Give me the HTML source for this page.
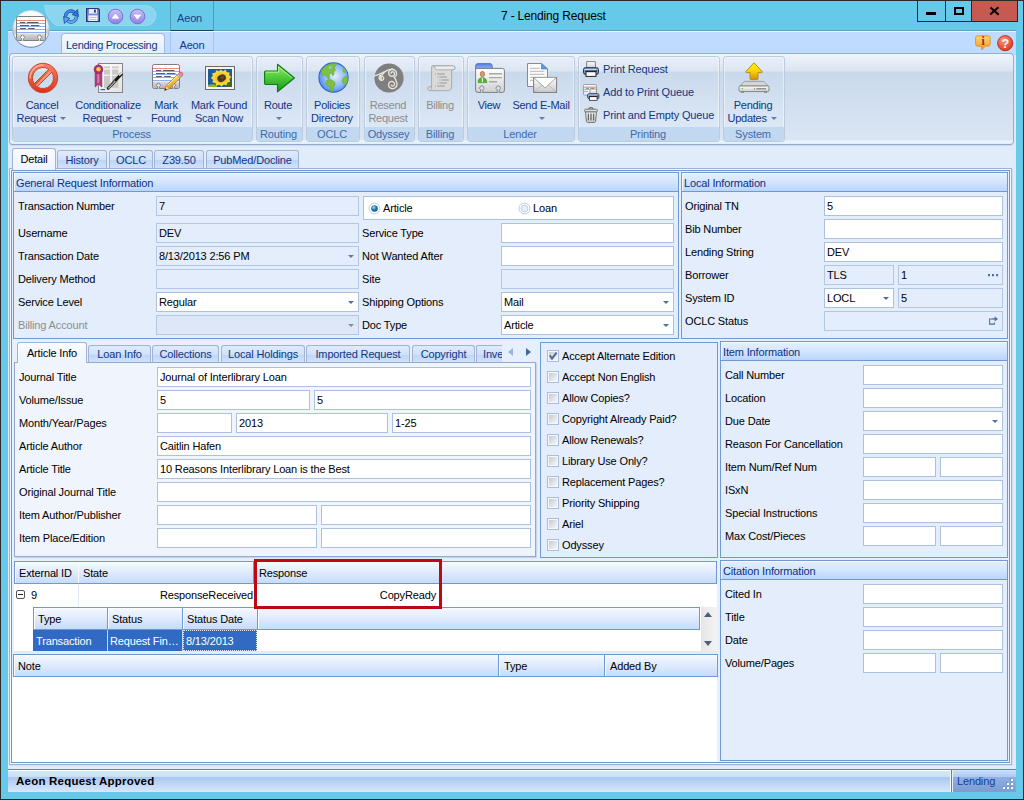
<!DOCTYPE html>
<html><head><meta charset="utf-8"><title>7 - Lending Request</title>
<style>
html,body{margin:0;padding:0}
body{width:1024px;height:800px;overflow:hidden;position:relative;background:#67c9e9;font-family:"Liberation Sans",sans-serif;font-size:11px;color:#000;letter-spacing:-0.15px}
body>*{position:absolute;box-sizing:content-box}
i{position:absolute;display:block}
#frame{left:0;top:0;width:1022px;height:798px;border:1px solid #2b2b2b;background:#67c9e9}
#client{left:8px;top:31px;width:1008px;height:761px;background:#e1ecfa}
#title{left:501px;top:8px;font-size:12px;line-height:16px;color:#000;letter-spacing:-.18px;white-space:nowrap}
#capbox{left:917px;top:0;width:99px;height:21px;border:1px solid #262626;border-top:0}
.cbd{top:1px;width:1px;height:20px;background:#262626}
#capx{left:972px;top:1px;width:45px;height:20px;background:#c75a50}
#qat{display:none}
#ctx{left:170px;top:1px;width:42px;height:29px;border-left:1px solid #4c9db8;border-right:1px solid #4c9db8;border-bottom:1px solid #24424e;color:#1e3f8f;text-align:left;text-indent:6px;line-height:34px}
#ctx2{left:170px;top:32px;width:42px;height:21px;border-left:1px solid #a5c4ee;border-right:1px solid #a5c4ee;background:linear-gradient(#c6dfff,#bfdbff)}
#tabbar{left:8px;top:30px;width:1008px;height:24px;background:linear-gradient(#eef4fd 0,#eef4fd 1px,#bfdbff 1px);border-top:1px solid #5aa4c0}
#rtab{left:61px;top:33px;width:102px;height:21px;letter-spacing:-.3px;border:1px solid #9dbce4;border-bottom:0;border-radius:4px 4px 0 0;background:linear-gradient(#f5f9fe,#e4edf8);color:#103684;text-align:left;text-indent:4px;line-height:23px}
#rtab2{left:171px;top:34px;width:42px;height:20px;color:#103684;text-align:center;line-height:22px}
#rpanel{left:9px;top:53px;width:1003px;height:90px;border:1px solid #8daee0;border-bottom-color:#93a7c9;border-radius:4px;background:linear-gradient(#f2f6fb 0,#edf2fa 2px,#dae5f2 17px,#c9d9ec 18px,#dbe6f4 86px,#eef6fd 87px,#dbf0fa 100%);box-shadow:0 1px 1px #cdd9ea}
.rg{top:56px;height:84px;border:1px solid #bccbdd;border-radius:3px;background:linear-gradient(#f3f7fc 0,#e8eef8 1px,#dce6f3 14px,#c9d9ec 15px,#dde8f6 70px);box-shadow:inset 1px 0 0 rgba(255,255,255,.45),inset -1px 0 0 rgba(255,255,255,.45);overflow:hidden}
.rgl{position:absolute;left:0;right:0;bottom:0;height:14px;color:#3e6aaa;text-align:center;line-height:14px;background:#c1d8f0;text-indent:-2px}
.rb{top:99px;width:100px;text-align:center;color:#103684;line-height:13px;white-space:nowrap;letter-spacing:-0.25px}
.rb div{height:13px}
.rb.dis{color:#8d8d8d}
.da{position:relative;display:inline-block;width:0;height:0;border:3px solid transparent;border-top:3px solid #5a7db5;border-bottom:0;vertical-align:2px;margin-left:1px}
.rs{color:#103684;line-height:13px;white-space:nowrap}
.l{line-height:13px;white-space:nowrap}
.l.dis{color:#8d8d8d}
.b{border:1px solid #abc1de;background:#fff;line-height:18px;padding:0;text-indent:2px;white-space:nowrap;overflow:hidden}
.b.ro{background:#e3edfb;border-color:#b2c7e3}
.b.dz{background:#dde7f6}
.ca{right:4px;top:8px;width:0;height:0;border:3px solid transparent;border-top:3px solid #4a6ea9;border-bottom:0}
.dots{position:absolute;right:3px;top:0;color:#33518f;letter-spacing:1px;font-weight:bold;text-indent:0}
.g{border:1px solid #6e99d3;background:#e3edfb}
.gh{border-bottom:1px solid #6e99d3;box-shadow:inset 1px 1px 0 #f4f8ff;background:linear-gradient(#e6f0ff,#d3e5ff 50%,#b9d5fe);color:#0c2f7e;padding-left:2px;overflow:hidden}
.tb{border:1px solid #a1b4d6;border-bottom:0;border-radius:3px 3px 0 0;background:linear-gradient(#dfebfb,#cfe1fa 50%,#bdd5f6 51%,#d3e4fb);color:#103684;text-align:center;white-space:nowrap}
.tb.sel{background:linear-gradient(#f9fbff,#eef4fd);color:#000;z-index:2}
#page{left:9px;top:168px;width:1001px;height:595px;border:1px solid #9fb2d6;background:#f3f7fe;box-shadow:1px 1px 0 #d3deef}
#page2{left:11px;top:170px;width:997px;height:591px;border:1px solid #6e99d3;background:#e6effc}
#apage{left:14px;top:362px;width:520px;height:193px;border:1px solid #93a9ce;background:#f0f5fd;box-shadow:1px 1px 1px #c9d6ea}
.pn{border:1px solid #6e99d3;background:#e3edfb}
.nl{width:0;height:0;border:4px solid transparent;border-right:5px solid #9bb2d9;border-left:0}
.nr{width:0;height:0;border:4px solid transparent;border-left:5px solid #3f66ab;border-right:0}
.wh{background:#fff}
.h{border-right:1px solid #6e99d3;border-bottom:1px solid #6e99d3;box-shadow:inset 1px 1px 0 #f8fbff;padding-top:1px;background:linear-gradient(#f6f9ff,#e1ecfd 45%,#c6dbfb);padding-left:5px;white-space:nowrap;overflow:hidden}
.gl{height:1px;background:#6e99d3}
.vl{width:1px;background:#6e99d3}
.exp{width:7px;height:7px;border:1px solid #555;border-radius:2px;background:#fff}
.exp i{left:1px;top:3px;width:5px;height:1px;background:#222}
.selrow{background:#316ac5}
.sc{color:#fff;line-height:22px;white-space:nowrap}
.foc{border:1px dotted #dfe8f7}
.sb{background:linear-gradient(to right,#e6e6e6,#f4f4f4)}
.up{width:0;height:0;border:4.5px solid transparent;border-bottom:5px solid #4f5d80;border-top:0}
.dn{width:0;height:0;border:4.5px solid transparent;border-top:5px solid #4f5d80;border-bottom:0}
.rowsep{background:#e1ecfa}
#red{left:254px;top:559px;width:182px;height:44px;border:3px solid #bc0a14}
#status{left:8px;top:769px;width:1008px;height:22px;background:linear-gradient(#fafcff 0,#fafcff 1px,#d8e6f9 1px,#cbdef6 7px,#a9c8f2 7px,#d9e7f8 100%);border-top:1px solid #5a84c2;line-height:23px;font-size:11px;letter-spacing:0}
#status b{margin-left:8px;font-size:11.5px;letter-spacing:.22px}
#spanel{left:950px;top:770px;width:63px;height:22px;border-left:1px solid #f6f9fe;box-shadow:inset 1px 0 0 #567fbe,inset 2px 0 0 #e8f0fc;background:linear-gradient(#d5e4fa 0,#c7dbf7 1px,#afc9f0 7px,#8fb0e4 7px,#7d9dd0 100%);color:#163f94;line-height:23px;text-indent:6px;width:65px}

.xb{left:989.2px;top:9.9px;width:10.6px;height:2.4px;background:#000}

</style></head>
<body>
<svg width="0" height="0" style="left:0;top:0"><defs>
<linearGradient id="gCard" x1="0" y1="0" x2="0" y2="1"><stop offset="0" stop-color="#dcdcdc"/><stop offset="1" stop-color="#b4b4b4"/></linearGradient>
<linearGradient id="gRed" x1="0" y1="0" x2="0" y2="1"><stop offset="0" stop-color="#f7846a"/><stop offset="1" stop-color="#d9331c"/></linearGradient>
<linearGradient id="gRed2" x1="0" y1="0" x2="0" y2="1"><stop offset="0" stop-color="#fbb09c"/><stop offset="1" stop-color="#ee6248"/></linearGradient>
<linearGradient id="gGreen" x1="0" y1="0" x2="0" y2="1"><stop offset="0" stop-color="#93ee62"/><stop offset=".5" stop-color="#4cc83a"/><stop offset="1" stop-color="#16931a"/></linearGradient>
<radialGradient id="gGlobe" cx=".55" cy=".45" r=".6"><stop offset="0" stop-color="#e4effd"/><stop offset=".6" stop-color="#8dbaf6"/><stop offset="1" stop-color="#4a86e8"/></radialGradient>
<linearGradient id="gYel" x1="0" y1="0" x2="0" y2="1"><stop offset="0" stop-color="#fff400"/><stop offset=".45" stop-color="#f6d80a"/><stop offset="1" stop-color="#d28e12"/></linearGradient>
<linearGradient id="gSilver" x1="0" y1="0" x2="0" y2="1"><stop offset="0" stop-color="#ffffff"/><stop offset="1" stop-color="#c9c9c9"/></linearGradient>
<linearGradient id="gOrb" x1="0" y1="0" x2="0" y2="1"><stop offset="0" stop-color="#ffffff"/><stop offset=".45" stop-color="#e6ebf1"/><stop offset=".55" stop-color="#c4cedb"/><stop offset="1" stop-color="#e8eef6"/></linearGradient>
<linearGradient id="gOrbS" x1="0" y1="0" x2="0" y2="1"><stop offset="0" stop-color="#dde3ea"/><stop offset=".5" stop-color="#a9b8cc"/><stop offset="1" stop-color="#5f7fab"/></linearGradient>
<linearGradient id="gPurp" x1="0" y1="0" x2="0" y2="1"><stop offset="0" stop-color="#c9c2f9"/><stop offset="1" stop-color="#8f7fe6"/></linearGradient>
<linearGradient id="gBlueTab" x1="0" y1="0" x2="0" y2="1"><stop offset="0" stop-color="#4d7fe6"/><stop offset="1" stop-color="#8fb2f5"/></linearGradient>
<linearGradient id="gOrange" x1="0" y1="0" x2="0" y2="1"><stop offset="0" stop-color="#ffd27a"/><stop offset="1" stop-color="#f39a1e"/></linearGradient>
<radialGradient id="gHelp" cx=".4" cy=".3" r=".8"><stop offset="0" stop-color="#ff9a7a"/><stop offset="1" stop-color="#d92a14"/></radialGradient>
<linearGradient id="gDoc" x1="0" y1="0" x2="1" y2="1"><stop offset="0" stop-color="#ffffff"/><stop offset="1" stop-color="#e2e2e2"/></linearGradient>
<linearGradient id="gPaper" x1="0" y1="0" x2="0" y2="1"><stop offset="0" stop-color="#ffffff"/><stop offset="1" stop-color="#d0d0d0"/></linearGradient>
<linearGradient id="gPen" x1="0" y1="0" x2="0" y2="1"><stop offset="0" stop-color="#ffd94a"/><stop offset="1" stop-color="#e79a0c"/></linearGradient>
<linearGradient id="gChk" x1="0" y1="0" x2="1" y2="1"><stop offset="0" stop-color="#c6cad2"/><stop offset="1" stop-color="#f6f7f9"/></linearGradient>
<radialGradient id="gBall" cx=".4" cy=".35" r=".7"><stop offset="0" stop-color="#a8dcf0"/><stop offset=".45" stop-color="#2a86b8"/><stop offset="1" stop-color="#0e4a80"/></radialGradient>
</defs></svg>
<div id="frame"></div>
<div id="client"></div>
<div id="title">7 - Lending Request</div>
<div id="capbox"></div>
<div class="cbd" style="left:945px"></div><div class="cbd" style="left:971px"></div>
<div id="capx"></div>
<i style="left:926px;top:12px;width:10px;height:3px;background:#000"></i>
<i style="left:954px;top:7px;width:6px;height:4px;border:2px solid #000"></i>
<i class="xb" style="transform:rotate(42deg)"></i><i class="xb" style="transform:rotate(-42deg)"></i>
<div id="qat"></div>
<svg style="left:0;top:0" width="170" height="31" viewBox="0 0 170 31"><path d="M44.5 5.5 H146 A10 10 0 0 1 146 25.5 H56 Q46 18 44.5 5.5 Z" fill="#fff" fill-opacity=".24" stroke="#fff" stroke-opacity=".22" stroke-width="1"/></svg><svg style="left:63px;top:7.5px" width="16" height="17" viewBox="0 0 16 17"><path d="M2.6 8.4 A5.4 5.4 0 0 1 11.4 4.2" fill="none" stroke="#1d4fa8" stroke-width="3.4"/><path d="M2.6 8.4 A5.4 5.4 0 0 1 11.4 4.2" fill="none" stroke="#3f8aea" stroke-width="2"/><path d="M9.2 6.6 L14.6 1.6 L15.4 8.6 Z" fill="#2f74dc" stroke="#1d4fa8" stroke-width=".9" stroke-linejoin="round"/><path d="M13.4 8.6 A5.4 5.4 0 0 1 4.6 12.8" fill="none" stroke="#1d4fa8" stroke-width="3.4"/><path d="M13.4 8.6 A5.4 5.4 0 0 1 4.6 12.8" fill="none" stroke="#62a8f6" stroke-width="2"/><path d="M6.8 10.4 L1.4 15.4 L.6 8.4 Z" fill="#5aa2f2" stroke="#1d4fa8" stroke-width=".9" stroke-linejoin="round"/></svg><svg style="left:86px;top:8px" width="14" height="14" viewBox="0 0 14 14"><path d="M.6 .6 H12.2 L13.4 1.8 V13.4 H.6 Z" fill="#7b8fd0" stroke="#27357e" stroke-width="1.2" stroke-linejoin="round"/><rect x="3" y="1" width="8" height="4.6" fill="#e8ecf8"/><rect x="8" y="1.6" width="1.8" height="3" fill="#27357e"/><rect x="2.4" y="7.4" width="9.2" height="5.6" fill="#f4f4f8"/><path d="M3.6 9.5 H10.4 M3.6 11.5 H10.4" stroke="#b9bdd0" stroke-width=".9"/></svg><svg style="left:106.5px;top:7.5px" width="17" height="17" viewBox="0 0 17 17"><circle cx="8.5" cy="8.5" r="7.3" fill="url(#gPurp)" stroke="#7a6cd8" stroke-width="1"/><path d="M5.2 10.2 L8.5 6 L11.8 10.2 Z" fill="#fff" stroke="#fff" stroke-width=".8" stroke-linejoin="round"/></svg><svg style="left:128.5px;top:7.5px" width="17" height="17" viewBox="0 0 17 17"><circle cx="8.5" cy="8.5" r="7.3" fill="url(#gPurp)" stroke="#7a6cd8" stroke-width="1"/><path d="M5.2 7 L8.5 11.2 L11.8 7 Z" fill="#fff" stroke="#fff" stroke-width=".8" stroke-linejoin="round"/></svg>
<div id="tabbar"></div>
<div id="ctx"><span>Aeon</span></div>
<div id="ctx2"></div>
<div id="rtab">Lending Processing</div>
<div id="rtab2">Aeon</div>
<svg style="left:12px;top:10px" width="38" height="38" viewBox="0 0 38 38"><circle cx="19" cy="19" r="18.3" fill="url(#gOrb)" stroke="url(#gOrbS)" stroke-width="1"/><path d="M2.2 24 A17.6 17.6 0 0 0 35.8 24 Q19 33 2.2 24 Z" fill="#fff" opacity=".85"/><rect x="4.5" y="6.5" width="29" height="24" rx="1.8" fill="#fff" stroke="#7e7e7e"/><path d="M5.0 23.5 H33.0 V29.0 Q33.0 30.0 32.0 30.0 H6.0 Q5.0 30.0 5.0 29.0 Z" fill="url(#gCard)"/><path d="M9.6 30.8 V28.8 A1.9 1.9 0 1 1 11.4 28.8 V30.8 M0 0 M26.6 30.8 V28.8 A1.9 1.9 0 1 1 28.4 28.8 V30.8" fill="#f2f5f9" stroke="#7e7e7e" stroke-width=".9"/><path d="M5 10.5 H33" stroke="#f08a8a" stroke-width="1"/><path d="M5 13.5 H33" stroke="#8aaef2" stroke-width="1"/><path d="M5 16.5 H33" stroke="#8aaef2" stroke-width="1"/><path d="M5 19.5 H33" stroke="#8aaef2" stroke-width="1"/><path d="M5 22.5 H33" stroke="#8aaef2" stroke-width="1"/><path d="M8 12.5 H13.3 M15 12.5 H26.5" stroke="#5e5e5e" stroke-width="1.1"/><path d="M8 15.5 H17.2 M18.8 15.5 H27.4" stroke="#5e5e5e" stroke-width="1.1"/><path d="M8 18.5 H13.9 M16.1 18.5 H22.7" stroke="#5e5e5e" stroke-width="1.1"/></svg>
<svg style="left:975px;top:35px" width="16" height="16" viewBox="0 0 16 16"><path d="M2.5 .8 H13 Q15.2 .8 15.2 3 V9 Q15.2 11.2 13 11.2 H10.2 L6.6 15 V11.2 H2.5 Q.6 11.2 .6 9 V3 Q.6 .8 2.5 .8 Z" fill="url(#gOrange)" stroke="#e8901c" stroke-width=".9"/><text x="8" y="10" text-anchor="middle" font-family="Liberation Serif,serif" font-weight="bold" font-size="11.5" fill="#9b2a1a">i</text></svg><svg style="left:997px;top:34.6px" width="17" height="17" viewBox="0 0 17 17"><circle cx="8.2" cy="8.2" r="7.6" fill="url(#gHelp)" stroke="#b4200e" stroke-width=".8"/><text x="8.3" y="12.8" text-anchor="middle" font-family="Liberation Sans,sans-serif" font-weight="bold" font-size="12.5" fill="#fff">?</text></svg>
<div id="rpanel"></div>
<div class="rg" style="left:12px;width:239px"><div class="rgl">Process</div></div>
<div class="rg" style="left:256px;width:45px"><div class="rgl">Routing</div></div>
<div class="rg" style="left:306px;width:52px"><div class="rgl">OCLC</div></div>
<div class="rg" style="left:364px;width:49px"><div class="rgl">Odyssey</div></div>
<div class="rg" style="left:418px;width:44px"><div class="rgl">Billing</div></div>
<div class="rg" style="left:467px;width:106px"><div class="rgl">Lender</div></div>
<div class="rg" style="left:578px;width:140px"><div class="rgl">Printing</div></div>
<div class="rg" style="left:723px;width:60px"><div class="rgl">System</div></div>
<div class="rb" style="left:-8px"><div>Cancel</div><div style="margin-left:-2px">Request <i class="da"></i></div></div>
<div class="rb" style="left:58px"><div>Conditionalize</div><div style="margin-left:-2px">Request <i class="da"></i></div></div>
<div class="rb" style="left:116px"><div>Mark</div><div>Found</div></div>
<div class="rb" style="left:169px"><div>Mark Found</div><div>Scan Now</div></div>
<div class="rb" style="left:228px"><div>Route</div><div><i class="da"></i></div></div>
<div class="rb" style="left:282px"><div>Policies</div><div>Directory</div></div>
<div class="rb dis" style="left:338px"><div>Resend</div><div>Request</div></div>
<div class="rb dis" style="left:390px"><div>Billing</div><div></div></div>
<div class="rb" style="left:439px"><div>View</div><div></div></div>
<div class="rb" style="left:491px"><div>Send E-Mail</div><div><i class="da"></i></div></div>
<div class="rb" style="left:703px"><div>Pending</div><div style="margin-left:-2px">Updates <i class="da"></i></div></div>
<div class="rs" style="left:603px;top:63px">Print Request</div>
<div class="rs" style="left:603px;top:86px">Add to Print Queue</div>
<div class="rs" style="left:603px;top:109px">Print and Empty Queue</div>
<svg style="left:27px;top:62px" width="32" height="32" viewBox="0 0 32 32"><path fill-rule="evenodd" d="M16 1.3 A14.7 14.7 0 1 1 15.99 1.3 Z M7.24 21.79 A10.5 10.5 0 0 1 21.79 7.24 Z M24.76 10.21 A10.5 10.5 0 0 1 10.21 24.76 Z" fill="url(#gRed)" stroke="#cf3a22" stroke-width=".9"/><path d="M16 3.1 A12.9 12.9 0 0 0 3.1 16" fill="none" stroke="#fcc0ae" stroke-width="1.5" opacity=".75" stroke-linecap="round"/><path d="M9.4 23.6 L23.6 9.4" stroke="#f9a88e" stroke-width="1.8" opacity=".85"/></svg><svg style="left:93px;top:62px" width="32" height="32" viewBox="0 0 32 32"><rect x="5.5" y="1.5" width="24" height="29" fill="url(#gDoc)" stroke="#858585"/><g fill="#c9c9c6"><rect x="11" y="4.5" width="6" height="1.8"/><rect x="19" y="4.5" width="6.4" height="1.8"/><rect x="11" y="7.6" width="6" height="5"/><rect x="19" y="7.6" width="6.4" height="5"/><rect x="11" y="13.8" width="6" height="12"/><rect x="19" y="13.8" width="6.4" height="12"/></g><path d="M7.5 27.6 H12.2" stroke="#3b63b8" stroke-width="1.3"/><path d="M2.2 9 V25 L5.4 22 L8.8 25 V9 Z" fill="#b23a7e" stroke="#8e1f5c" stroke-width=".7"/><path d="M4.4 10 V21.6 L5.4 21 L6.2 21.6 V10 Z" fill="#d585b0"/><circle cx="5.5" cy="7.3" r="4.4" fill="#b02d77" stroke="#8e1f5c" stroke-width=".7"/><circle cx="5.5" cy="7.3" r="2.3" fill="#f6c12c"/><circle cx="5.2" cy="6.9" r="1" fill="#fde27a"/><path d="M13.9 27.6 L13.8 25.8 L27.4 10.8 Q28.5 9.9 29.6 10.9 Q30.5 12 29.6 13 L15.9 27.8 Z" fill="#151515"/><path d="M15.4 26.3 L22.4 18.7" stroke="#fff" stroke-width="1.7" stroke-dasharray=".7 .6"/><path d="M26.6 13 L28.8 10.8" stroke="#e4e4e4" stroke-width="1.7" stroke-linecap="round"/></svg><svg style="left:152px;top:62px" width="32" height="32" viewBox="0 0 32 32"><rect x="0.5" y="2.5" width="27" height="24" rx="1.8" fill="#fff" stroke="#7e7e7e"/><path d="M1.0 19.5 H27.0 V25.0 Q27.0 26.0 26.0 26.0 H2.0 Q1.0 26.0 1.0 25.0 Z" fill="url(#gCard)"/><path d="M5.6 26.8 V24.8 A1.9 1.9 0 1 1 7.4 24.8 V26.8 M0 0 M20.6 26.8 V24.8 A1.9 1.9 0 1 1 22.4 24.8 V26.8" fill="#d8e2ef" stroke="#7e7e7e" stroke-width=".9"/><path d="M1 6.5 H27" stroke="#f08a8a" stroke-width="1"/><path d="M1 9.5 H27" stroke="#8aaef2" stroke-width="1"/><path d="M1 12.5 H27" stroke="#8aaef2" stroke-width="1"/><path d="M1 15.5 H27" stroke="#8aaef2" stroke-width="1"/><path d="M1 18.5 H27" stroke="#8aaef2" stroke-width="1"/><path d="M4 8.5 H9.3 M11 8.5 H22.5" stroke="#5e5e5e" stroke-width="1.1"/><path d="M4 11.5 H13.2 M14.8 11.5 H23.4" stroke="#5e5e5e" stroke-width="1.1"/><path d="M4 14.5 H9.9 M12.1 14.5 H18.7" stroke="#5e5e5e" stroke-width="1.1"/><path d="M12.6 28.4 L14.3 23.74 L25.26 12.78 L28.22 15.74 L17.26 26.7 Z" fill="url(#gPen)" stroke="#b5760c" stroke-width=".7" stroke-linejoin="round"/><path d="M15.6 23.6 L26.2 13" stroke="#fff3a8" stroke-width="1"/><path d="M25.26 12.78 L27.4 10.64 Q28.9 9.5 30.3 10.7 Q31.6 12 30.4 13.6 L28.22 15.74 Z" fill="#e98a98" stroke="#b24c5c" stroke-width=".6"/><path d="M24.9 13.1 L25.9 12.1 L28.9 15.1 L27.9 16.1 Z" fill="#c9c9c9" stroke="#8a8a8a" stroke-width=".4"/><path d="M12.6 28.4 L14.3 23.74 L17.26 26.7 Z" fill="#f1d2a0" stroke="#b5760c" stroke-width=".5"/><path d="M12.6 28.4 L13.3 26.3 L14.7 27.7 Z" fill="#111"/></svg><svg style="left:205px;top:66px" width="30" height="24" viewBox="0 0 30 24"><rect x=".5" y=".5" width="29" height="23" fill="#f4f4f4" stroke="#6a6a6a"/><rect x="3" y="3" width="24" height="18" fill="#1f5a9c"/><path d="M3 19 Q8 17.4 12 19.4 L12 21 H3 Z" fill="#8fae3a"/><path d="M21 16 Q24 14 27 16 V21 H20 Z" fill="#3f6a2a"/><path d="M15.6 3.6 L18 5.2 L20.6 3.6 L21.8 6.2 L24.6 6.4 L24.2 9.2 L26.4 11 L24.4 13 L25.2 15.8 L22.4 16.4 L21.6 19.2 L18.8 18.4 L16.6 20.6 L14.4 18.8 L11.4 19.8 L10.4 17 L7.4 16.6 L8 13.8 L5.8 12 L7.8 10 L7.2 7.2 L10.2 6.8 L11.4 4.2 L14 5.2 Z" fill="#f4d83a"/><path d="M12 8 L16 6.4 L21 8 L23 12 L20.6 16.4 L15 17.6 L10.6 15 L10 11 Z" fill="#eec22a" opacity=".7"/><ellipse cx="16.6" cy="12.2" rx="4.4" ry="3.6" transform="rotate(-25 16.6 12.2)" fill="#4a351f"/><ellipse cx="17.4" cy="11.4" rx="2" ry="1.4" transform="rotate(-25 17.4 11.4)" fill="#6a4a2a"/></svg><svg style="left:263.5px;top:63px" width="31" height="30" viewBox="0 0 31 30"><path d="M1.5 8 H13.5 V1.2 L30.4 15 L13.5 28.8 V21.5 H1.5 Q.6 21.5 .6 20.6 V9 Q.6 8 1.5 8 Z" fill="url(#gGreen)" stroke="#0d7a12" stroke-width="1.1" stroke-linejoin="round"/><path d="M2 9.2 H14.6 V3.8 L28 14.8" fill="none" stroke="#c4f7a4" stroke-width="1" opacity=".8"/></svg><svg style="left:317.5px;top:62px" width="31" height="31" viewBox="0 0 31 31"><circle cx="15.5" cy="15.5" r="14.6" fill="url(#gGlobe)" stroke="#2f66cf" stroke-width="1.1"/><path d="M3.4 8.6 Q7 3 13.6 1.6 L19 1.4 Q17 3.6 16.4 6 L17.4 8.4 L15.8 9.4 L16 12.8 L14.6 13.6 L13.6 11 L11.8 11.2 L11.2 13.6 Q11.8 16 11 17.2 L9 15.6 Q7 12.4 5.6 12.6 L4.4 14 Q3 11 3.4 8.6 Z" fill="#7ec043" stroke="#5ea02c" stroke-width=".5"/><path d="M10.6 5.2 Q12 3.6 14 4.2 L13 6.4 L11 7 Z" fill="#8fc6d8"/><path d="M9.2 18 Q11.6 17 14.4 18.2 Q17.4 19.6 17.2 22 Q16.6 24 15.2 25.2 L14.8 29.6 L12.6 29.4 L12.2 25 Q9.6 24.4 8 22 Q7.6 19.4 9.2 18 Z" fill="#7ec043" stroke="#5ea02c" stroke-width=".5"/><path d="M24.4 7 L26 5.6 L28.4 9.4 L26.6 11.4 L24.6 9.4 Z" fill="#7ec043"/><path d="M25 16.4 Q27 13.6 29.8 14.4 Q30.4 18.4 28.6 22.2 Q26.4 23.6 25 21 Q24 18.6 25 16.4 Z" fill="#7ec043" stroke="#5ea02c" stroke-width=".5"/></svg><svg style="left:374.25px;top:62.75px" width="30" height="30" viewBox="0 0 30 30"><circle cx="15" cy="15" r="14.6" fill="#7f7f7f"/><path d="M20.30 14.50 Q21.60 13.20 21.89 12.75 Q22.18 12.30 22.31 11.87 Q22.45 11.43 22.48 10.98 Q22.52 10.54 22.47 10.09 Q22.41 9.65 22.27 9.23 Q22.12 8.82 21.90 8.44 Q21.67 8.07 21.38 7.75 Q21.09 7.44 20.75 7.19 Q20.40 6.94 20.02 6.77 Q19.63 6.61 19.23 6.52 Q18.83 6.44 18.42 6.43 Q18.01 6.43 17.62 6.51 Q17.23 6.60 16.87 6.75 Q16.51 6.91 16.19 7.13 Q15.88 7.35 15.62 7.63 Q15.36 7.91 15.17 8.23 Q14.97 8.55 14.85 8.89 Q14.73 9.24 14.68 9.60 Q14.64 9.95 14.66 10.30 Q14.69 10.65 14.78 10.98 Q14.88 11.32 15.04 11.61 Q15.19 11.91 15.41 12.17 Q15.62 12.42 15.87 12.62 Q16.12 12.82 16.40 12.96 Q16.68 13.10 16.98 13.18 Q17.28 13.26 17.58 13.28 Q17.88 13.29 18.17 13.25 Q18.46 13.20 18.72 13.10 Q18.99 13.00 19.22 12.85 Q19.45 12.70 19.64 12.51 Q19.84 12.32 19.98 12.10 Q20.12 11.88 20.22 11.65 Q20.31 11.41 20.35 11.17 Q20.39 10.93 20.38 10.69 Q20.37 10.45 20.31 10.23 Q20.25 10.01 20.15 9.81 Q20.05 9.62 19.92 9.45 Q19.79 9.28 19.63 9.16 Q19.47 9.03 19.29 8.94 Q19.12 8.85 18.94 8.80 Q18.75 8.75 18.57 8.75 Q18.39 8.74 18.22 8.77 Q18.05 8.80 17.90 8.86 Q17.75 8.92 17.62 9.01 Q17.50 9.10 17.40 9.21 Q17.30 9.32 17.23 9.44 Q17.16 9.56 17.12 9.68 Q17.09 9.81 17.08 9.93 Q17.07 10.05 17.09 10.17 L17.11 10.28" fill="none" stroke="#e8e4df" stroke-width="1.35" stroke-linecap="round" stroke-linejoin="round"/><path d="M0.3 12.9 Q5.4 11.7 10.3 8.9 Q14.6 6.3 18.2 5.95" fill="none" stroke="#e8e4df" stroke-width="1.35" stroke-linecap="round" stroke-linejoin="round"/><path d="M10.60 9.00 Q9.20 10.60 8.63 11.31 Q8.06 12.01 7.78 12.03 Q7.50 12.05 7.23 12.12 Q6.95 12.19 6.71 12.31 Q6.46 12.43 6.24 12.60 Q6.02 12.76 5.84 12.96 Q5.66 13.17 5.53 13.39 Q5.39 13.62 5.30 13.87 Q5.21 14.12 5.17 14.37 Q5.13 14.63 5.14 14.88 Q5.15 15.13 5.21 15.38 Q5.27 15.62 5.37 15.84 Q5.47 16.07 5.61 16.27 Q5.75 16.46 5.92 16.63 Q6.09 16.79 6.29 16.92 Q6.48 17.05 6.70 17.13 Q6.91 17.22 7.13 17.26 Q7.35 17.30 7.57 17.30 Q7.79 17.30 8.01 17.26 Q8.22 17.21 8.42 17.13 Q8.61 17.05 8.79 16.94 Q8.96 16.82 9.11 16.68 Q9.25 16.54 9.36 16.37 Q9.48 16.21 9.56 16.03 Q9.63 15.85 9.67 15.66 Q9.72 15.48 9.72 15.29 Q9.72 15.11 9.69 14.93 Q9.66 14.75 9.60 14.58 Q9.54 14.42 9.44 14.27 Q9.35 14.12 9.24 14.00 Q9.12 13.88 8.99 13.78 Q8.86 13.68 8.71 13.62 Q8.57 13.55 8.42 13.51 Q8.27 13.48 8.11 13.47 Q7.96 13.47 7.82 13.49 Q7.68 13.51 7.54 13.56 Q7.41 13.61 7.29 13.68 Q7.18 13.75 7.08 13.84 Q6.98 13.93 6.91 14.03 Q6.83 14.14 6.78 14.25 Q6.73 14.36 6.70 14.47 Q6.67 14.59 6.67 14.70 Q6.66 14.82 6.68 14.93 Q6.70 15.03 6.74 15.13 Q6.77 15.23 6.83 15.31 Q6.88 15.40 6.95 15.47 Q7.02 15.54 7.09 15.59 Q7.17 15.64 7.25 15.67 Q7.33 15.71 7.41 15.72 L7.49 15.74" fill="none" stroke="#e8e4df" stroke-width="1.35" stroke-linecap="round" stroke-linejoin="round"/><path d="M20.30 14.50 Q21.80 16.20 21.92 17.19 Q22.03 18.19 22.29 18.60 Q22.54 19.02 22.71 19.47 Q22.87 19.93 22.94 20.40 Q23.01 20.87 22.98 21.34 Q22.96 21.82 22.84 22.27 Q22.72 22.72 22.52 23.13 Q22.32 23.54 22.04 23.90 Q21.77 24.26 21.43 24.56 Q21.09 24.85 20.71 25.07 Q20.33 25.28 19.92 25.42 Q19.51 25.56 19.09 25.61 Q18.67 25.66 18.25 25.63 Q17.83 25.59 17.44 25.48 Q17.04 25.37 16.69 25.18 Q16.33 25.00 16.02 24.75 Q15.71 24.50 15.46 24.20 Q15.21 23.91 15.03 23.57 Q14.85 23.24 14.74 22.88 Q14.64 22.52 14.60 22.16 Q14.57 21.80 14.60 21.44 Q14.64 21.09 14.74 20.76 Q14.85 20.42 15.01 20.12 Q15.18 19.83 15.39 19.57 Q15.61 19.32 15.86 19.12 Q16.12 18.92 16.40 18.77 Q16.68 18.63 16.98 18.55 Q17.28 18.47 17.58 18.45 Q17.87 18.43 18.16 18.47 Q18.45 18.51 18.72 18.60 Q18.99 18.70 19.22 18.84 Q19.46 18.98 19.66 19.16 Q19.85 19.34 20.00 19.55 Q20.16 19.76 20.26 19.99 Q20.36 20.21 20.41 20.45 Q20.47 20.69 20.47 20.92 Q20.47 21.15 20.43 21.37 Q20.39 21.59 20.31 21.79 Q20.22 21.99 20.11 22.16 Q19.99 22.33 19.85 22.47 Q19.70 22.61 19.54 22.71 Q19.38 22.81 19.21 22.87 Q19.04 22.93 18.87 22.95 Q18.70 22.98 18.53 22.97 Q18.37 22.95 18.22 22.91 Q18.07 22.87 17.94 22.79 Q17.81 22.72 17.71 22.63 Q17.61 22.54 17.53 22.44 Q17.45 22.33 17.41 22.22 L17.36 22.11" fill="none" stroke="#e8e4df" stroke-width="1.35" stroke-linecap="round" stroke-linejoin="round"/></svg><svg style="left:427px;top:65px" width="29" height="27" viewBox="0 0 29 27"><path d="M5.2 .8 H26 Q28 1 28 3 Q28 4.8 26 4.8 H24.6 V22 Q24.6 25.6 21.6 25.6 H3 Q.8 25.4 .8 23.4 Q.8 21.6 3 21.6 H4.6 V3.6 Q4.4 1.2 5.2 .8 Z" fill="#dadada" stroke="#a4a4a4" stroke-width=".9"/><path d="M6.2 1 Q8 1.2 8 3 Q8 4.8 9.6 4.8 H26 Q28 4.8 28 3 Q28 1 26 .8 Z" fill="#ececec" stroke="#a4a4a4" stroke-width=".8"/><path d="M3 21.6 Q4.8 21.8 4.8 23.6 Q4.8 25 3.4 25.5" fill="none" stroke="#a4a4a4" stroke-width=".8"/><path d="M8 9 h1 M10 9 H18" stroke="#9a9a9a" stroke-width="1.2"/><path d="M10.4 12 h1 M12.4 12 H20" stroke="#9a9a9a" stroke-width="1.2"/><path d="M12.4 15 h1 M14.4 15 H22" stroke="#9a9a9a" stroke-width="1.2"/><path d="M10.4 18 h1 M12.4 18 H20" stroke="#9a9a9a" stroke-width="1.2"/><path d="M8 21 h1 M10 21 H18" stroke="#9a9a9a" stroke-width="1.2"/></svg><svg style="left:475px;top:63px" width="30" height="30" viewBox="0 0 30 30"><path d="M.6 5.6 V3 Q.6 .6 3 .6 H15 Q17.2 .6 17.2 3 V5.6 Z" fill="url(#gBlueTab)" stroke="#5a6fc0" stroke-width=".9"/><path d="M.6 5.4 H27.4 Q29.4 5.4 29.4 7.4 V27.4 Q29.4 29.4 27.4 29.4 H2.6 Q.6 29.4 .6 27.4 Z" fill="url(#gPaper)" stroke="#7d7d86" stroke-width="1"/><path d="M5.8 29.4 V26.8 A2.1 2.1 0 1 1 7.8 26.8 V29.4 M0 0 M22.2 29.4 V26.8 A2.1 2.1 0 1 1 24.2 26.8 V29.4" fill="#d8e2ef" stroke="#7d7d86" stroke-width=".9"/><ellipse cx="7.4" cy="11" rx="2.2" ry="2.7" fill="#d79a68" stroke="#a86a3c" stroke-width=".6"/><path d="M3 19.6 Q3 14.8 7.4 14.4 Q11.8 14.8 11.8 19.6 Z" fill="#4cb82e" stroke="#2f8f1c" stroke-width=".6"/><path d="M6.8 14.8 H8 V19 H6.8 Z" fill="#e8f6e0"/><path d="M14 10.8 H27 M14 14.6 H27 M14 18.8 H22" stroke="#a8a8a8" stroke-width="1.4"/></svg><svg style="left:527px;top:63px" width="31" height="31" viewBox="0 0 31 31"><path d="M.5 .5 H14.5 L20.5 6 V23.5 H.5 Z" fill="#fbfbfb" stroke="#8a8a8a"/><path d="M14.5 .5 L20.5 6 H14.5 Z" fill="#5a9ae6" stroke="#3a74c4" stroke-width=".6"/><path d="M3 5.4 H12.6 M3 8.4 H17.4 M3 11.4 H17.4 M3 14.4 H6 M3 17.4 H6" stroke="#c4c4c4" stroke-width="1.3"/><rect x="6.6" y="14.4" width="23" height="15" fill="url(#gSilver)" stroke="#7c7c7c"/><path d="M7 14.8 L18.1 25 L29.2 14.8" fill="#fff" stroke="#9a9a9a" stroke-width=".9"/><path d="M7 29 L14.8 22 M29.2 29 L21.4 22" stroke="#b4b4b4" stroke-width=".8"/></svg><svg style="left:583px;top:61px" width="16" height="16" viewBox="0 0 16 16"><g transform="translate(0,0) scale(1.0)"><path d="M3.6 7 V.6 H12.4 V7 Z" fill="url(#gPaper)" stroke="#777" stroke-width=".9"/><rect x=".6" y="6.8" width="14.8" height="6.4" rx="1.6" fill="#7aa6e2" stroke="#222" stroke-width="1"/><path d="M1.4 8.4 H14.6" stroke="#c8dcf6" stroke-width="1"/><rect x="3" y="10.6" width="10" height="4.8" fill="#fff" stroke="#222" stroke-width="1"/><rect x="2.4" y="9.6" width="11.2" height="1.5" fill="#222"/><circle cx="13.6" cy="9" r=".6" fill="#1d4fa8"/></g></svg><svg style="left:583px;top:84px" width="17" height="17" viewBox="0 0 17 17"><rect x=".5" y=".5" width="13" height="10.6" rx="1" fill="#f2f2f2" stroke="#9a9a9a" stroke-width=".9"/><path d="M1 3.2 H13" stroke="#f08a8a"/><path d="M1 5.4 H6 M1 7.6 H5" stroke="#8aaef2"/><path d="M3 4.3 H6 M7.6 4.3 H11" stroke="#777" stroke-width=".9"/><g transform="translate(4.2,4.6) scale(0.76)"><path d="M3.6 7 V.6 H12.4 V7 Z" fill="url(#gPaper)" stroke="#777" stroke-width=".9"/><rect x=".6" y="6.8" width="14.8" height="6.4" rx="1.6" fill="#7aa6e2" stroke="#222" stroke-width="1"/><path d="M1.4 8.4 H14.6" stroke="#c8dcf6" stroke-width="1"/><rect x="3" y="10.6" width="10" height="4.8" fill="#fff" stroke="#222" stroke-width="1"/><rect x="2.4" y="9.6" width="11.2" height="1.5" fill="#222"/><circle cx="13.6" cy="9" r=".6" fill="#1d4fa8"/></g></svg><svg style="left:584px;top:107px" width="14" height="16" viewBox="0 0 14 16"><path d="M5 2.4 Q5 .6 7 .6 Q9 .6 9 2.4" fill="none" stroke="#6e6e6e" stroke-width="1.2"/><rect x=".6" y="2.2" width="12.8" height="2.8" rx="1.2" fill="#e2e2e2" stroke="#707070" stroke-width="1"/><path d="M1.6 5 H12.4 L11.6 14.4 Q11.4 15.4 10.4 15.4 H3.6 Q2.6 15.4 2.4 14.4 Z" fill="url(#gPaper)" stroke="#707070" stroke-width="1"/><path d="M4.4 6.6 V13.6 M7 6.6 V13.6 M9.6 6.6 V13.6" stroke="#6c6c6c" stroke-width="1.4"/></svg><svg style="left:738px;top:62px" width="32" height="32" viewBox="0 0 32 32"><path d="M16 .8 L24.2 9.6 Q24.6 10.6 23.6 10.6 H20 V16.6 Q20 17.6 19 17.6 H13 Q12 17.6 12 16.6 V10.6 H8.4 Q7.4 10.6 7.8 9.6 Z" fill="url(#gYel)" stroke="#c08a10" stroke-width="1" stroke-linejoin="round"/><path d="M6.4 19.4 H25.6 L30.4 24 H1.6 Z" fill="#d6d6d6" stroke="#8e8e8e" stroke-width=".8" stroke-linejoin="round"/><rect x="1" y="24" width="30" height="5.6" rx="1.4" fill="url(#gSilver)" stroke="#7e7e7e" stroke-width=".9"/><path d="M3 30.2 H6 M26 30.2 H29" stroke="#777" stroke-width="1"/><circle cx="4.4" cy="26.8" r=".7" fill="#4fc41c"/><circle cx="16.4" cy="26.8" r=".6" fill="#666"/><path d="M18.4 26.8 H28" stroke="#777" stroke-width="1.1"/></svg>
<div class="tb sel" style="left:12px;top:148px;width:42px;height:21px;line-height:21px">Detail</div>
<div class="tb" style="left:57px;top:150px;width:48px;height:18px;line-height:18px">History</div>
<div class="tb" style="left:109px;top:150px;width:42px;height:18px;line-height:18px">OCLC</div>
<div class="tb" style="left:154px;top:150px;width:48px;height:18px;line-height:18px">Z39.50</div>
<div class="tb" style="left:206px;top:150px;width:91px;height:18px;line-height:18px">PubMed/Docline</div>
<div id="page"></div>
<div id="page2"></div>
<div class="g" style="left:13px;top:172px;width:664px;height:165px"><div class="gh" style="height:18px;line-height:20px">General Request Information</div></div>
<div class="l " style="left:18px;top:200px">Transaction Number</div>
<div class="l " style="left:18px;top:227px">Username</div>
<div class="l " style="left:18px;top:250px">Transaction Date</div>
<div class="l " style="left:18px;top:273px">Delivery Method</div>
<div class="l " style="left:18px;top:296px">Service Level</div>
<div class="l dis" style="left:18px;top:319px">Billing Account</div>
<div class="b ro" style="left:156px;top:196px;width:201px;height:18px">7</div>
<div class="b ro" style="left:156px;top:223px;width:201px;height:18px">DEV</div>
<div class="b ro" style="left:156px;top:246px;width:201px;height:18px">8/13/2013 2:56 PM<i class="ca" style="border-top-color:#5b7caf"></i></div>
<div class="b ro" style="left:156px;top:269px;width:201px;height:18px"></div>
<div class="b " style="left:156px;top:292px;width:201px;height:18px">Regular<i class="ca" style="border-top-color:#4a6ea9"></i></div>
<div class="b ro dz" style="left:156px;top:315px;width:201px;height:18px"><i class="ca" style="border-top-color:#8d8d8d"></i></div>
<div class="b " style="left:363px;top:196px;width:309px;height:22px"></div>
<svg style="left:367.5px;top:201.5px" width="13" height="13" viewBox="0 0 13 13"><circle cx="6.5" cy="6.5" r="5.4" fill="#fff" stroke="#bccbea" stroke-width="1"/><circle cx="6.5" cy="6.5" r="3.3" fill="url(#gBall)"/></svg>
<div class="l " style="left:383px;top:202px">Article</div>
<svg style="left:517.5px;top:201.5px" width="13" height="13" viewBox="0 0 13 13"><circle cx="6.5" cy="6.5" r="5.4" fill="#fff" stroke="#bccbea" stroke-width="1"/><circle cx="6.5" cy="6.5" r="3.4" fill="#e4eefc" stroke="#c8ccd2" stroke-width=".9"/></svg>
<div class="l " style="left:533px;top:202px">Loan</div>
<div class="l " style="left:362px;top:227px">Service Type</div>
<div class="l " style="left:362px;top:250px">Not Wanted After</div>
<div class="l " style="left:362px;top:273px">Site</div>
<div class="l " style="left:362px;top:296px">Shipping Options</div>
<div class="l " style="left:362px;top:319px">Doc Type</div>
<div class="b " style="left:501px;top:223px;width:171px;height:18px"></div>
<div class="b " style="left:501px;top:246px;width:171px;height:18px"></div>
<div class="b ro" style="left:501px;top:269px;width:171px;height:18px"></div>
<div class="b " style="left:501px;top:292px;width:171px;height:18px">Mail<i class="ca" style="border-top-color:#4a6ea9"></i></div>
<div class="b " style="left:501px;top:315px;width:171px;height:18px">Article<i class="ca" style="border-top-color:#4a6ea9"></i></div>
<div class="g" style="left:681px;top:172px;width:325px;height:165px"><div class="gh" style="height:18px;line-height:20px">Local Information</div></div>
<div class="l " style="left:685px;top:200px">Original TN</div>
<div class="l " style="left:685px;top:223px">Bib Number</div>
<div class="l " style="left:685px;top:246px">Lending String</div>
<div class="l " style="left:685px;top:269px">Borrower</div>
<div class="l " style="left:685px;top:292px">System ID</div>
<div class="l " style="left:685px;top:315px">OCLC Status</div>
<div class="b " style="left:824px;top:196px;width:177px;height:18px">5</div>
<div class="b " style="left:824px;top:219px;width:177px;height:18px"></div>
<div class="b " style="left:824px;top:242px;width:177px;height:18px">DEV</div>
<div class="b ro" style="left:824px;top:265px;width:68px;height:18px">TLS</div>
<div class="b ro" style="left:898px;top:265px;width:103px;height:18px">1<svg style="position:absolute;right:3px;top:8px" width="11" height="3" viewBox="0 0 11 3"><path d="M0 0h2v2.2h-2z M4 0h2v2.2h-2z M8.1 0h2v2.2h-2z" fill="#4a6ea9"/></svg></div>
<div class="b " style="left:824px;top:288px;width:68px;height:18px">LOCL<i class="ca" style="border-top-color:#4a6ea9"></i></div>
<div class="b ro" style="left:898px;top:288px;width:103px;height:18px">5</div>
<div class="b ro" style="left:824px;top:311px;width:177px;height:18px"><svg style="position:absolute;right:3px;top:4px" width="11" height="10" viewBox="0 0 11 10"><path d="M5.4 2.9 H1.6 V8.1 H6.4 V6.4" fill="none" stroke="#4a6ea9" stroke-width="1.05"/><path d="M4.6 2.9 H8" stroke="#4a6ea9" stroke-width="1.2"/><path d="M6.6 .2 L10 2.9 L6.6 5.6 Z" fill="#4a6ea9"/></svg></div>
<div class="tb sel" style="left:17px;top:342px;width:68px;height:20px;line-height:20px">Article Info</div>
<div class="tb" style="left:88px;top:345px;width:61px;height:17px;line-height:17px">Loan Info</div>
<div class="tb" style="left:152px;top:345px;width:65px;height:17px;line-height:17px">Collections</div>
<div class="tb" style="left:221px;top:345px;width:82px;height:17px;line-height:17px">Local Holdings</div>
<div class="tb" style="left:306px;top:345px;width:102px;height:17px;line-height:17px">Imported Request</div>
<div class="tb" style="left:412px;top:345px;width:61px;height:17px;line-height:17px">Copyright</div>
<div class="tb" style="left:476px;top:345px;width:26px;height:17px;line-height:17px;border-right:0;overflow:hidden;text-align:left;padding-left:6px;width:19px;border-radius:2px 0 0 0">Inve</div>
<i class="nl" style="left:508px;top:348px"></i><i class="nr" style="left:526px;top:348px"></i>
<div id="apage"></div>
<div class="l " style="left:19px;top:371px">Journal Title</div>
<div class="l " style="left:19px;top:394px">Volume/Issue</div>
<div class="l " style="left:19px;top:417px">Month/Year/Pages</div>
<div class="l " style="left:19px;top:440px">Article Author</div>
<div class="l " style="left:19px;top:463px">Article Title</div>
<div class="l " style="left:19px;top:486px">Original Journal Title</div>
<div class="l " style="left:19px;top:509px">Item Author/Publisher</div>
<div class="l " style="left:19px;top:532px">Item Place/Edition</div>
<div class="b " style="left:157px;top:367px;width:372px;height:18px">Journal of Interlibrary Loan</div>
<div class="b " style="left:157px;top:390px;width:151px;height:18px">5</div>
<div class="b " style="left:314px;top:390px;width:215px;height:18px">5</div>
<div class="b " style="left:157px;top:413px;width:73px;height:18px"></div>
<div class="b " style="left:236px;top:413px;width:150px;height:18px">2013</div>
<div class="b " style="left:392px;top:413px;width:137px;height:18px">1-25</div>
<div class="b " style="left:157px;top:436px;width:372px;height:18px">Caitlin Hafen</div>
<div class="b " style="left:157px;top:459px;width:372px;height:18px">10 Reasons Interlibrary Loan is the Best</div>
<div class="b " style="left:157px;top:482px;width:372px;height:18px"></div>
<div class="b " style="left:157px;top:505px;width:158px;height:18px"></div>
<div class="b " style="left:321px;top:505px;width:208px;height:18px"></div>
<div class="b " style="left:157px;top:528px;width:158px;height:18px"></div>
<div class="b " style="left:321px;top:528px;width:208px;height:18px"></div>
<div class="pn" style="left:540px;top:342px;width:176px;height:214px"></div>
<svg style="left:547px;top:350px" width="12" height="12" viewBox="0 0 12 12"><rect x=".5" y=".5" width="11" height="11" fill="#f6f8fb" stroke="#a9bedd"/><rect x="2" y="2" width="8" height="8" fill="url(#gChk)"/><path d="M2.7 5.2 L5 8.5 L9.6 2.6" fill="none" stroke="#4a6a9e" stroke-width="2"/></svg>
<div class="l " style="left:562px;top:350px">Accept Alternate Edition</div>
<svg style="left:547px;top:371px" width="12" height="12" viewBox="0 0 12 12"><rect x=".5" y=".5" width="11" height="11" fill="#f6f8fb" stroke="#a9bedd"/><rect x="2" y="2" width="8" height="8" fill="url(#gChk)"/></svg>
<div class="l " style="left:562px;top:371px">Accept Non English</div>
<svg style="left:547px;top:392px" width="12" height="12" viewBox="0 0 12 12"><rect x=".5" y=".5" width="11" height="11" fill="#f6f8fb" stroke="#a9bedd"/><rect x="2" y="2" width="8" height="8" fill="url(#gChk)"/></svg>
<div class="l " style="left:562px;top:392px">Allow Copies?</div>
<svg style="left:547px;top:413px" width="12" height="12" viewBox="0 0 12 12"><rect x=".5" y=".5" width="11" height="11" fill="#f6f8fb" stroke="#a9bedd"/><rect x="2" y="2" width="8" height="8" fill="url(#gChk)"/></svg>
<div class="l " style="left:562px;top:413px">Copyright Already Paid?</div>
<svg style="left:547px;top:434px" width="12" height="12" viewBox="0 0 12 12"><rect x=".5" y=".5" width="11" height="11" fill="#f6f8fb" stroke="#a9bedd"/><rect x="2" y="2" width="8" height="8" fill="url(#gChk)"/></svg>
<div class="l " style="left:562px;top:434px">Allow Renewals?</div>
<svg style="left:547px;top:455px" width="12" height="12" viewBox="0 0 12 12"><rect x=".5" y=".5" width="11" height="11" fill="#f6f8fb" stroke="#a9bedd"/><rect x="2" y="2" width="8" height="8" fill="url(#gChk)"/></svg>
<div class="l " style="left:562px;top:455px">Library Use Only?</div>
<svg style="left:547px;top:476px" width="12" height="12" viewBox="0 0 12 12"><rect x=".5" y=".5" width="11" height="11" fill="#f6f8fb" stroke="#a9bedd"/><rect x="2" y="2" width="8" height="8" fill="url(#gChk)"/></svg>
<div class="l " style="left:562px;top:476px">Replacement Pages?</div>
<svg style="left:547px;top:497px" width="12" height="12" viewBox="0 0 12 12"><rect x=".5" y=".5" width="11" height="11" fill="#f6f8fb" stroke="#a9bedd"/><rect x="2" y="2" width="8" height="8" fill="url(#gChk)"/></svg>
<div class="l " style="left:562px;top:497px">Priority Shipping</div>
<svg style="left:547px;top:518px" width="12" height="12" viewBox="0 0 12 12"><rect x=".5" y=".5" width="11" height="11" fill="#f6f8fb" stroke="#a9bedd"/><rect x="2" y="2" width="8" height="8" fill="url(#gChk)"/></svg>
<div class="l " style="left:562px;top:518px">Ariel</div>
<svg style="left:547px;top:539px" width="12" height="12" viewBox="0 0 12 12"><rect x=".5" y=".5" width="11" height="11" fill="#f6f8fb" stroke="#a9bedd"/><rect x="2" y="2" width="8" height="8" fill="url(#gChk)"/></svg>
<div class="l " style="left:562px;top:539px">Odyssey</div>
<div class="g" style="left:720px;top:341px;width:286px;height:215px"><div class="gh" style="height:18px;line-height:20px">Item Information</div></div>
<div class="l " style="left:725px;top:369px">Call Number</div>
<div class="l " style="left:725px;top:392px">Location</div>
<div class="l " style="left:725px;top:415px">Due Date</div>
<div class="l " style="left:725px;top:438px">Reason For Cancellation</div>
<div class="l " style="left:725px;top:461px">Item Num/Ref Num</div>
<div class="l " style="left:725px;top:484px">ISxN</div>
<div class="l " style="left:725px;top:507px">Special Instructions</div>
<div class="l " style="left:725px;top:530px">Max Cost/Pieces</div>
<div class="b " style="left:863px;top:365px;width:138px;height:18px"></div>
<div class="b " style="left:863px;top:388px;width:138px;height:18px"></div>
<div class="b " style="left:863px;top:411px;width:138px;height:18px"><i class="ca" style="border-top-color:#4a6ea9"></i></div>
<div class="b " style="left:863px;top:434px;width:138px;height:18px"></div>
<div class="b " style="left:863px;top:457px;width:71px;height:18px"></div>
<div class="b " style="left:940px;top:457px;width:61px;height:18px"></div>
<div class="b " style="left:863px;top:480px;width:138px;height:18px"></div>
<div class="b " style="left:863px;top:503px;width:138px;height:18px"></div>
<div class="b " style="left:863px;top:526px;width:71px;height:18px"></div>
<div class="b " style="left:940px;top:526px;width:61px;height:18px"></div>
<div class="g" style="left:720px;top:560px;width:286px;height:199px"><div class="gh" style="height:18px;line-height:20px">Citation Information</div></div>
<div class="l " style="left:725px;top:588px">Cited In</div>
<div class="l " style="left:725px;top:611px">Title</div>
<div class="l " style="left:725px;top:634px">Date</div>
<div class="l " style="left:725px;top:657px">Volume/Pages</div>
<div class="b " style="left:863px;top:584px;width:138px;height:18px"></div>
<div class="b " style="left:863px;top:607px;width:138px;height:18px"></div>
<div class="b " style="left:863px;top:630px;width:138px;height:18px"></div>
<div class="b " style="left:863px;top:653px;width:71px;height:18px"></div>
<div class="b " style="left:940px;top:653px;width:61px;height:18px"></div>
<div class="wh" style="left:14px;top:584px;width:703px;height:67px"></div><div class="wh" style="left:12px;top:677px;width:705px;height:85px"></div>
<div class="vl" style="left:14px;top:561px;height:23px"></div>
<div class="h" style="left:15px;top:562px;width:59px;height:20px;line-height:20px;padding-left:4px">External ID</div>
<div class="h" style="left:78px;top:562px;width:170px;height:20px;line-height:20px;padding-left:5px">State</div>
<div class="h" style="left:254px;top:562px;width:457px;height:20px;line-height:20px;padding-left:5px">Response</div>
<div class="gl" style="left:14px;top:561px;width:703px"></div>
<div class="exp" style="left:16px;top:590px"><i></i></div>
<div class="l " style="left:31px;top:589px">9</div>
<div class="l" style="left:78px;top:589px;width:175px;text-align:right">ResponseReceived</div>
<div class="l" style="left:254px;top:589px;width:182px;text-align:right">CopyReady</div>
<div class="vl" style="left:78px;top:584px;height:23px;background:#e4ebf7"></div>
<div class="gl" style="left:33px;top:607px;width:667px"></div>
<div class="h" style="left:34px;top:608px;width:69px;height:20px;line-height:20px;padding-left:4px">Type</div>
<div class="h" style="left:108px;top:608px;width:70px;height:20px;line-height:20px;padding-left:4px">Status</div>
<div class="h" style="left:183px;top:608px;width:70px;height:20px;line-height:20px;padding-left:4px">Status Date</div>
<div class="h" style="left:258px;top:608px;width:436px;height:20px;line-height:20px;padding-left:5px"></div>
<div class="vl" style="left:33px;top:608px;height:43px"></div><div class="vl" style="left:699px;top:608px;height:22px"></div>
<div class="selrow" style="left:33px;top:630px;width:224px;height:21px"></div>
<div class="sc" style="left:36px;top:630px">Transaction</div><div class="sc" style="left:110px;top:630px">Request Fin&#8230;</div><div class="sc" style="left:186px;top:630px">8/13/2013</div>
<div class="vl" style="left:107px;top:630px;height:21px;background:#c4d6f1"></div><div class="vl" style="left:182px;top:630px;height:21px;background:#c4d6f1"></div>
<div class="foc" style="left:183px;top:630px;width:72px;height:19px"></div>
<div class="sb" style="left:701px;top:607px;width:16px;height:44px"><i class="up" style="left:3px;top:5px"></i><i class="dn" style="left:3px;top:34px"></i></div>
<div class="rowsep" style="left:14px;top:651px;width:703px;height:4px"></div>
<div class="gl" style="left:13px;top:654px;width:705px"></div>
<div class="vl" style="left:13px;top:654px;height:23px"></div>
<div class="h" style="left:14px;top:655px;width:480px;height:20px;line-height:20px;padding-left:4px">Note</div>
<div class="h" style="left:499px;top:655px;width:100px;height:20px;line-height:20px;padding-left:5px">Type</div>
<div class="h" style="left:605px;top:655px;width:107px;height:20px;line-height:20px;padding-left:5px">Added By</div>
<div id="red"></div>
<div id="status"><b>Aeon Request Approved</b></div>
<div id="spanel">Lending</div>
<svg style="left:1001.5px;top:778px" width="12" height="12" viewBox="0 0 12 12"><rect x="8.4" y="0.4" width="1.6" height="1.6" fill="#5f82c0"/><rect x="9" y="1" width="2" height="2" fill="#fff"/><rect x="4.4" y="4.4" width="1.6" height="1.6" fill="#5f82c0"/><rect x="5" y="5" width="2" height="2" fill="#fff"/><rect x="8.4" y="4.4" width="1.6" height="1.6" fill="#5f82c0"/><rect x="9" y="5" width="2" height="2" fill="#fff"/><rect x="0.4" y="8.4" width="1.6" height="1.6" fill="#5f82c0"/><rect x="1" y="9" width="2" height="2" fill="#fff"/><rect x="4.4" y="8.4" width="1.6" height="1.6" fill="#5f82c0"/><rect x="5" y="9" width="2" height="2" fill="#fff"/><rect x="8.4" y="8.4" width="1.6" height="1.6" fill="#5f82c0"/><rect x="9" y="9" width="2" height="2" fill="#fff"/></svg>
</body></html>
